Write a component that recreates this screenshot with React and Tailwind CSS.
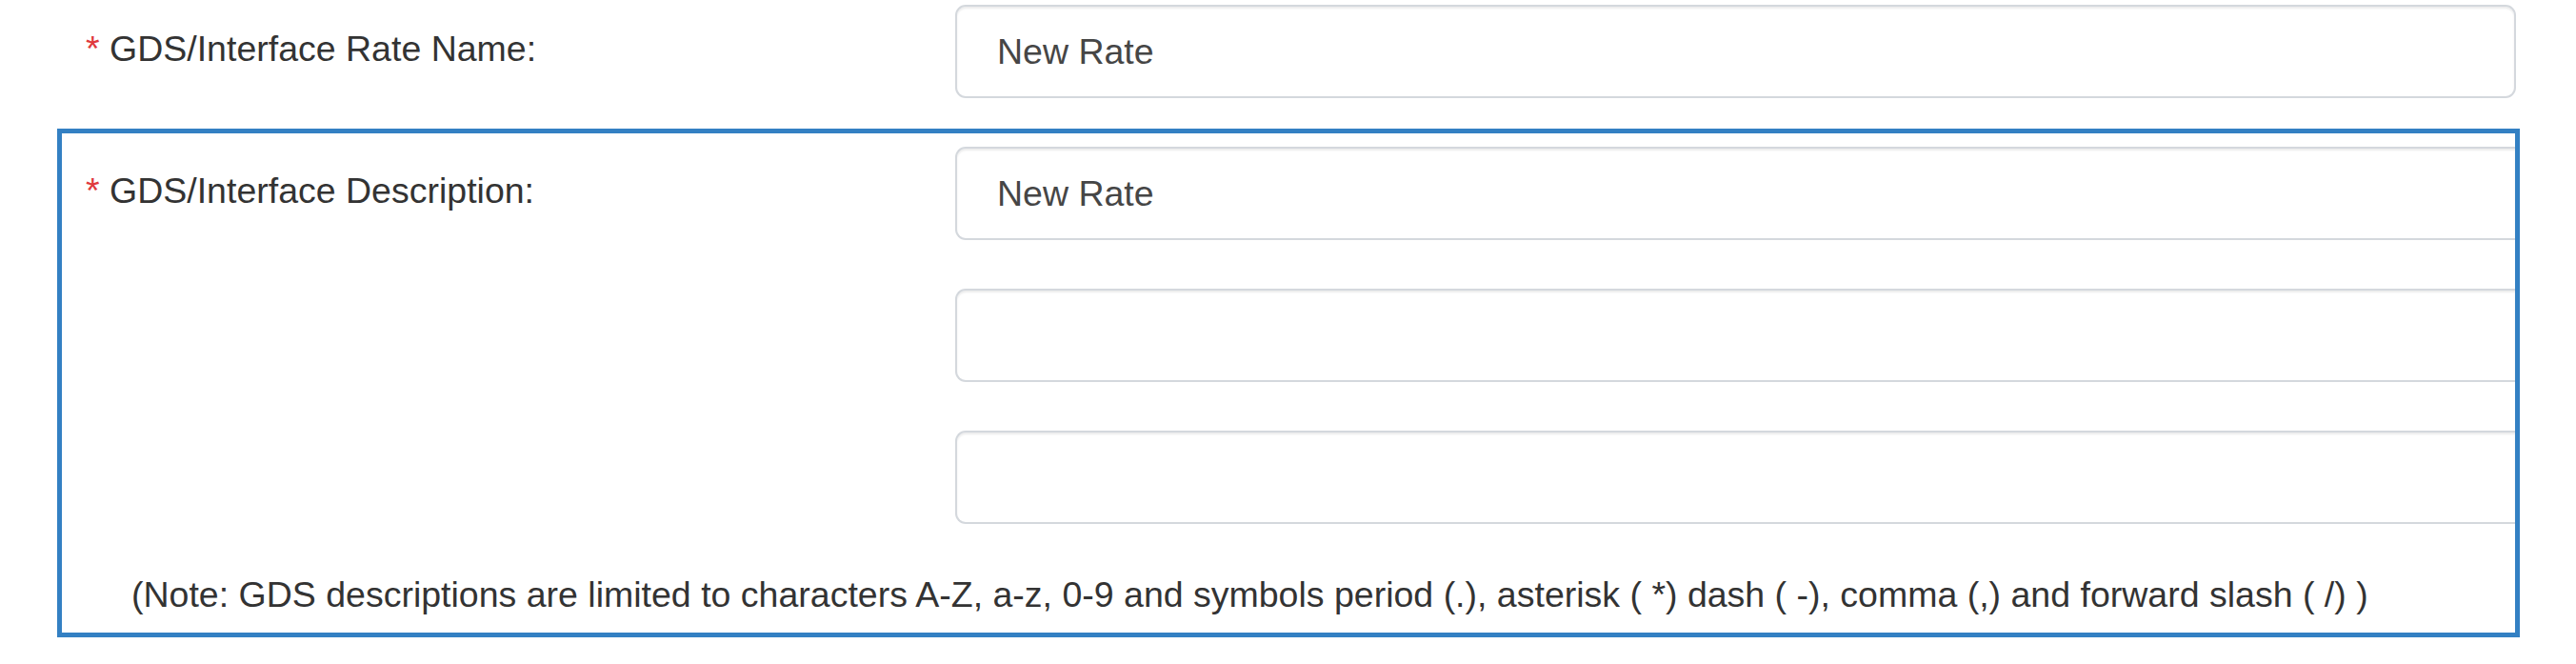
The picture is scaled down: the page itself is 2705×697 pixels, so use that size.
import { useState } from 'react'

const inputCls =
  'h-[98px] w-full rounded-[11px] border-2 border-[#d4d8dd] bg-white pl-[42px] pr-4 text-[37.5px] text-[#464646] shadow-[inset_0_2px_2px_rgba(0,0,0,0.075)] outline-none'

function Label({ children }) {
  return (
    <label className="block pt-[24px] text-[37.5px] leading-[44px] text-[#333]">
      <span className="text-[#e0393e]">*</span> {children}
    </label>
  )
}

export default function App() {
  const [rateName, setRateName] = useState('New Rate')
  const [desc1, setDesc1] = useState('New Rate')
  const [desc2, setDesc2] = useState('')
  const [desc3, setDesc3] = useState('')

  return (
    <div
      className="min-h-[697px] w-[2705px] bg-white pl-[60px] pt-[5px]"
      style={{ fontFamily: '"Liberation Sans", Arial, sans-serif' }}
    >
      <div className="w-[2586px]">
        <div className="flex items-start">
          <div className="w-[943px] shrink-0 pl-[30px]">
            <Label>GDS/Interface Rate Name:</Label>
          </div>
          <div className="w-[1639px]">
            <input className={inputCls} value={rateName} onChange={(e) => setRateName(e.target.value)} />
          </div>
        </div>

        <div className="mt-[32px] border-[5px] border-[#3380c3] pt-[14px] pb-[18px]">
          <div className="flex items-start">
            <div className="w-[938px] shrink-0 pl-[25px]">
              <Label>GDS/Interface Description:</Label>
            </div>
            <div className="flex flex-1 flex-col gap-[51px]">
              <input
                className={inputCls + ' rounded-r-none border-r-0'}
                value={desc1}
                onChange={(e) => setDesc1(e.target.value)}
              />
              <input
                className={inputCls + ' rounded-r-none border-r-0'}
                value={desc2}
                onChange={(e) => setDesc2(e.target.value)}
              />
              <input
                className={inputCls + ' rounded-r-none border-r-0'}
                value={desc3}
                onChange={(e) => setDesc3(e.target.value)}
              />
            </div>
          </div>
          <p className="mt-[52px] pl-[73px] text-[37.5px] leading-[44px] text-[#333]">
            (Note: GDS descriptions are limited to characters A-Z, a-z, 0-9 and symbols period (.), asterisk ( *) dash ( -), comma (,) and forward slash ( /) )
          </p>
        </div>
      </div>
    </div>
  )
}
